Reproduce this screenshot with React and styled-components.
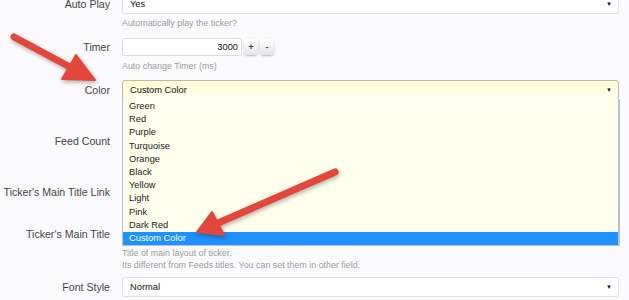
import React from 'react';
import styled, { createGlobalStyle } from 'styled-components';

const colorOptions = [
  'Green',
  'Red',
  'Purple',
  'Turquoise',
  'Orange',
  'Black',
  'Yellow',
  'Light',
  'Pink',
  'Dark Red',
  'Custom Color',
];

const App = () => {
  return (
    <Page>
      <GlobalStyle />
      <Form>
        <Row $mb={8}>
          <Label>Auto Play</Label>
          <Field>
            <Select>
              Yes
              <Caret>▼</Caret>
            </Select>
            <Hint>Automatically play the ticker?</Hint>
          </Field>
        </Row>
        <Row $mb={8}>
          <Label>Timer</Label>
          <Field>
            <SpinBox>
              <NumberInput>3000</NumberInput>
              <SpinButton>+</SpinButton>
              <SpinButton>-</SpinButton>
            </SpinBox>
            <Hint>Auto change Timer (ms)</Hint>
          </Field>
        </Row>
        <Row $mb={31} $top>
          <Label>Color</Label>
          <Field>
            <Select $focused>
              Custom Color
              <Caret>▼</Caret>
            </Select>
            <OptionList>
              {colorOptions.map((name) => (
                <Option key={name} $selected={name === 'Custom Color'}>
                  {name}
                </Option>
              ))}
            </OptionList>
          </Field>
        </Row>
        <Row $mb={31}>
          <Label>Feed Count</Label>
          <Field>
            <Select />
          </Field>
        </Row>
        <Row $mb={22}>
          <Label>Ticker's Main Title Link</Label>
          <Field>
            <Select />
          </Field>
        </Row>
        <Row $mb={6}>
          <Label>Ticker's Main Title</Label>
          <Field>
            <Select />
            <Hint>
              Title of main layout of ticker.
              <br />
              Its different from Feeds titles. You can set them in other field.
            </Hint>
          </Field>
        </Row>
        <Row $mb={0}>
          <Label>Font Style</Label>
          <Field>
            <Select>
              Normal
              <Caret>▼</Caret>
            </Select>
          </Field>
        </Row>
      </Form>
      <Annotations viewBox="0 0 629 300" width="629" height="300">
        <g fill="#e3463b" stroke="#e3463b" strokeLinejoin="round">
          <line x1="14" y1="37" x2="70" y2="67" strokeWidth="7" strokeLinecap="round" />
          <polygon points="62,79 76,55 95,80" strokeWidth="2" />
          <line x1="335" y1="172" x2="218" y2="223" strokeWidth="7" strokeLinecap="round" />
          <polygon points="212,212 224,235 197,232" strokeWidth="2" />
        </g>
      </Annotations>
    </Page>
  );
};

export default App;

const GlobalStyle = createGlobalStyle`
  body {
    margin: 0;
    background: #fafafc;
    font-family: "Liberation Sans", Arial, sans-serif;
  }
`;

const Page = styled.div`
  position: relative;
  width: 629px;
  height: 300px;
  overflow: hidden;
  background: #fafafc;
`;

const Form = styled.div`
  margin-top: -6px;
`;

const Row = styled.div`
  display: flex;
  margin-bottom: ${({ $mb }) => $mb}px;
  position: relative;
  z-index: ${({ $top }) => ($top ? 2 : 1)};
`;

const Label = styled.div`
  flex: none;
  width: 110px;
  text-align: right;
  font-size: 10.6px;
  line-height: 20px;
  color: #444;
`;

const Field = styled.div`
  position: relative;
  margin-left: 12px;
  width: 497px;
`;

const Select = styled.div`
  box-sizing: border-box;
  height: 20px;
  padding: 0 7px;
  display: flex;
  align-items: center;
  justify-content: space-between;
  font-size: 9.3px;
  color: #111;
  border: 1px solid ${({ $focused }) => ($focused ? '#b9b9b0' : '#e0e0e4')};
  border-radius: 3px;
  background: ${({ $focused }) =>
    $focused ? 'linear-gradient(#fdfbcf, #fffff2)' : '#fff'};
`;

const Caret = styled.span`
  font-size: 6px;
  color: #111;
  margin-right: -1px;
`;

const Hint = styled.div`
  margin-top: 3px;
  font-size: 8.9px;
  line-height: 12px;
  color: #9a9a9a;
`;

const SpinBox = styled.div`
  display: flex;
  align-items: center;
  height: 20px;
`;

const NumberInput = styled.div`
  box-sizing: border-box;
  width: 120px;
  height: 18px;
  padding-right: 3px;
  text-align: right;
  line-height: 16px;
  font-size: 9.3px;
  color: #111;
  background: #fff;
  border: 1px solid #dcdce0;
  border-radius: 3px;
`;

const SpinButton = styled.div`
  box-sizing: border-box;
  width: 14px;
  height: 16px;
  margin-left: 2px;
  line-height: 15px;
  text-align: center;
  font-size: 9.5px;
  font-weight: bold;
  color: #444;
  border-radius: 4px;
  background: linear-gradient(#ffffff, #e4e4e8);
  box-shadow: 0 1px 2px rgba(0, 0, 0, 0.25);
`;

const OptionList = styled.div`
  position: absolute;
  top: 19px;
  left: 0;
  width: 498px;
  box-sizing: border-box;
  padding-top: 1px;
  background: #ffffee;
  border: 1px solid #b7c3d4;
  border-right-width: 2px;
  border-top: none;
`;

const Option = styled.div`
  height: 13.2px;
  line-height: 13.2px;
  padding-left: 6px;
  font-size: 9.3px;
  color: ${({ $selected }) => ($selected ? '#fff' : '#222')};
  background: ${({ $selected }) => ($selected ? '#1e90ff' : 'transparent')};
`;

const Annotations = styled.svg`
  position: absolute;
  left: 0;
  top: 0;
  z-index: 5;
  pointer-events: none;
  filter: drop-shadow(1px 2px 2px rgba(0, 0, 0, 0.3));
`;
